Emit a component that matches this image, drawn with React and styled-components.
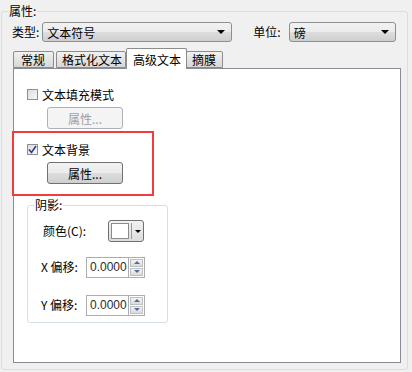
import React from "react";
import styled, { createGlobalStyle } from "styled-components";

const GlobalStyle = createGlobalStyle`
  html, body {
    margin: 0;
    padding: 0;
    background: #f0f0f0;
  }
  body {
    font-family: "Noto Sans CJK SC", "Liberation Sans", sans-serif;
    font-size: 12px;
    color: #000;
  }
`;

const Page = styled.div`
  width: 412px;
  height: 372px;
  background: #f0f0f0;
  padding: 5px 4px 2px 1px;
  box-sizing: border-box;
`;

const GroupBox = styled.fieldset`
  margin: 0;
  padding: ${(p) => p.$padding || "0"};
  border: 1px solid #d5dfe5;
  border-radius: 3px;
  box-sizing: border-box;
  min-width: 0;
  height: ${(p) => p.$height || "auto"};
  width: ${(p) => p.$width || "auto"};
  margin-top: ${(p) => p.$mt || "0"};
`;

const Legend = styled.legend`
  padding: 0 1px;
  margin-left: ${(p) => p.$offset || "6px"};
  font-size: 12px;
  line-height: 12px;
`;

const TopRow = styled.div`
  display: flex;
  align-items: center;
  height: 20px;
  margin-top: 5px;
  padding-left: 10px;
`;

const Label = styled.span`
  white-space: nowrap;
  margin-left: ${(p) => p.$ml || "0"};
  margin-right: ${(p) => p.$gap || "0"};
  width: ${(p) => p.$width || "auto"};
  line-height: 14px;
`;

const Combo = styled.div`
  width: ${(p) => p.$width};
  height: 20px;
  box-sizing: border-box;
  border: 1px solid #8e8f8f;
  border-radius: 3px;
  background: linear-gradient(#f2f2f2, #ebebeb 50%, #dddddd 51%, #cfcfcf);
  display: flex;
  align-items: center;
  justify-content: space-between;
  padding: 0 6px 0 4px;
`;

const Arrow = styled.span`
  width: 0;
  height: 0;
  border-left: 4px solid transparent;
  border-right: 4px solid transparent;
  border-top: 4px solid #000;
`;

const TabBar = styled.div`
  display: flex;
  align-items: flex-end;
  height: 20px;
  margin: 6px 0 0 11px;
  position: relative;
  z-index: 1;
`;

const Tab = styled.div`
  box-sizing: border-box;
  width: ${(p) => p.$w}px;
  height: ${(p) => (p.$active ? "21px" : "17px")};
  margin: ${(p) => (p.$active ? "0 -1px -1px 0" : "0 0 0 0")};
  margin-left: ${(p) => p.$ml || 0}px;
  border: 1px solid #8c8c8c;
  border-bottom: ${(p) => (p.$active ? "none" : "1px solid #8c8c8c")};
  border-radius: 2px 2px 0 0;
  background: ${(p) =>
    p.$active ? "#ffffff" : "linear-gradient(#f2f2f2, #e4e4e4 50%, #d7d7d7)"};
  display: flex;
  align-items: center;
  padding-left: ${(p) => p.$pl || 6}px;
  white-space: nowrap;
  position: relative;
  z-index: ${(p) => (p.$active ? 2 : 1)};
`;

const Panel = styled.div`
  margin-left: 11px;
  width: 388px;
  height: 295px;
  box-sizing: border-box;
  border: 1px solid #898c95;
  background: #fff;
  padding: 18px 0 0 13px;
`;

const CheckRow = styled.label`
  display: flex;
  align-items: center;
  gap: 4px;
  height: 14px;
`;

const Box = styled.span`
  width: 11px;
  height: 11px;
  box-sizing: border-box;
  border: 1px solid #8f8f8f;
  background: linear-gradient(135deg, #dcdcdc, #f8f8f8);
  display: inline-flex;
  align-items: center;
  justify-content: center;
`;

const Button = styled.div`
  width: 76px;
  height: 22px;
  box-sizing: border-box;
  border: 1px solid ${(p) => (p.$disabled ? "#adb2b5" : "#707070")};
  border-radius: 3px;
  background: ${(p) =>
    p.$disabled
      ? "#f4f4f4"
      : "linear-gradient(#f2f2f2, #ebebeb 50%, #dddddd 51%, #cfcfcf)"};
  color: ${(p) => (p.$disabled ? "#a0a0a0" : "#000")};
  display: flex;
  align-items: center;
  justify-content: center;
  margin: 6px 0 0 20px;
`;

const Highlight = styled.div`
  width: 142px;
  height: 65px;
  box-sizing: border-box;
  border: 2px solid #f33b3b;
  margin: 2px 0 0 -15px;
  padding: 9px 0 0 13px;
`;

const FieldRow = styled.div`
  display: flex;
  align-items: center;
  height: 22px;
  margin-top: ${(p) => p.$mt || "0"};
`;

const ColorButton = styled.div`
  width: 36px;
  height: 22px;
  box-sizing: border-box;
  border: 1px solid #707070;
  border-radius: 3px;
  background: linear-gradient(#f2f2f2, #dddddd);
  display: flex;
  align-items: center;
  padding: 2px;
  gap: 1px;
`;

const Swatch = styled.span`
  width: 22px;
  height: 16px;
  box-sizing: border-box;
  border: 1px solid #8a8a8a;
  background: #fff;
`;

const SmallArrow = styled.span`
  width: 0;
  height: 0;
  border-left: 3px solid transparent;
  border-right: 3px solid transparent;
  border-top: 3px solid #000;
  margin-left: 2px;
`;

const Divider = styled.span`
  width: 1px;
  height: 16px;
  background: #9a9a9a;
  margin-left: 1px;
`;

const Spin = styled.div`
  display: flex;
  align-items: stretch;
  height: 21px;
`;

const NumInput = styled.div`
  width: 42px;
  box-sizing: border-box;
  border: 1px solid #abadb3;
  border-right: none;
  background: #fff;
  display: flex;
  align-items: center;
  padding-left: 3px;
  color: #2c2c2c;
  font-family: "Liberation Sans", sans-serif;
`;

const SpinButtons = styled.div`
  width: 17px;
  box-sizing: border-box;
  border: 1px solid #abadb3;
  display: flex;
  flex-direction: column;
  gap: 1px;
  padding: 1px;
  background: #fff;
`;

const SpinBtn = styled.div`
  flex: 1;
  background: linear-gradient(#f4f4f4, #dadada);
  border: 1px solid #c0c0c0;
  display: flex;
  align-items: center;
  justify-content: center;
`;

const Tri = styled.span`
  width: 0;
  height: 0;
  border-left: 3px solid transparent;
  border-right: 3px solid transparent;
  ${(p) =>
    p.$up ? "border-bottom: 3px solid #4f6aa8;" : "border-top: 3px solid #4f6aa8;"}
`;

const Check = () => (
  <svg width="9" height="9" viewBox="0 0 9 9">
    <path d="M1 4.5 L3.5 7.5 L8 1" fill="none" stroke="#2a3f8f" strokeWidth="1.6" />
  </svg>
);

const Spinner = ({ value }) => (
  <Spin>
    <NumInput>{value}</NumInput>
    <SpinButtons>
      <SpinBtn>
        <Tri $up />
      </SpinBtn>
      <SpinBtn>
        <Tri />
      </SpinBtn>
    </SpinButtons>
  </Spin>
);

export default function App() {
  return (
    <Page>
      <GlobalStyle />
      <GroupBox $height="365px">
        <Legend $offset="6px">属性:</Legend>
        <TopRow>
          <Label $gap="3px">类型:</Label>
          <Combo $width="190px">
            <span>文本符号</span>
            <Arrow />
          </Combo>
          <Label $ml="21px" $gap="8px">
            单位:
          </Label>
          <Combo $width="107px">
            <span>磅</span>
            <Arrow />
          </Combo>
        </TopRow>
        <TabBar>
          <Tab $w={41} $pl={7}>常规</Tab>
          <Tab $w={70} $ml={2} $pl={5}>格式化文本</Tab>
          <Tab $w={61} $active $pl={6}>高级文本</Tab>
          <Tab $w={37} $pl={5}>摘膜</Tab>
        </TabBar>
        <Panel>
          <CheckRow>
            <Box />
            <span>文本填充模式</span>
          </CheckRow>
          <Button $disabled>属性...</Button>
          <Highlight>
            <CheckRow>
              <Box>
                <Check />
              </Box>
              <span>文本背景</span>
            </CheckRow>
            <Button>属性...</Button>
          </Highlight>
          <GroupBox $width="141px" $height="124px" $padding="0 0 0 15px" $mt="3px">
            <Legend $offset="-9px">阴影:</Legend>
            <FieldRow $mt="9px">
              <Label $width="65px">颜色(C):</Label>
              <ColorButton>
                <Swatch />
                <Divider />
                <SmallArrow />
              </ColorButton>
            </FieldRow>
            <FieldRow $mt="14px">
              <Label $width="45px" $ml="-2px">X 偏移:</Label>
              <Spinner value="0.0000" />
            </FieldRow>
            <FieldRow $mt="16px">
              <Label $width="45px" $ml="-2px">Y 偏移:</Label>
              <Spinner value="0.0000" />
            </FieldRow>
          </GroupBox>
        </Panel>
      </GroupBox>
    </Page>
  );
}
